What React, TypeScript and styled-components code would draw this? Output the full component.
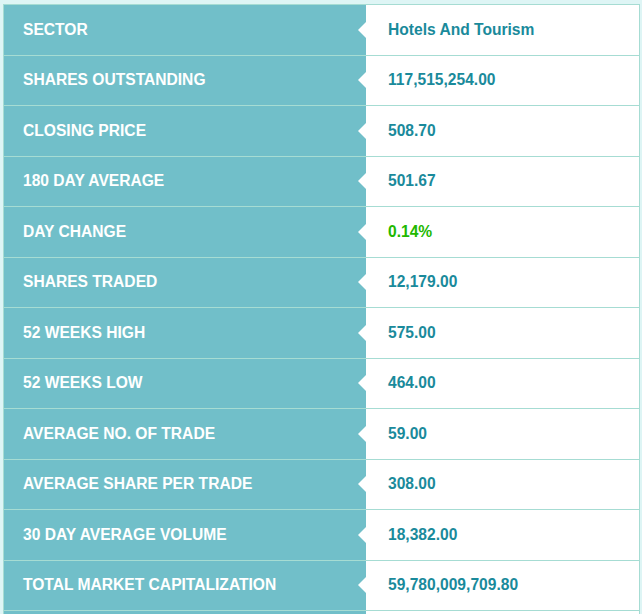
import React from "react";
import styled, { createGlobalStyle } from "styled-components";

const GlobalStyle = createGlobalStyle`
  html, body {
    margin: 0;
    padding: 0;
    background: #def5f5;
  }
  body {
    font-family: "Liberation Sans", Arial, Helvetica, sans-serif;
  }
`;

const Page = styled.div`
  padding: 4px 2px 0 3px;
  background: #def5f5;
  height: 614px;
  box-sizing: border-box;
  overflow: hidden;
`;

const Table = styled.div`
  border: 1px solid #a6dcd3;
  border-bottom: none;
  background: #ffffff;
`;

const Row = styled.div`
  display: grid;
  grid-template-columns: 362px 1fr;
  height: 50.5px;
  box-sizing: border-box;
  border-bottom: 1px solid #a6dcd3;
`;

const Label = styled.div`
  background: #71bfc9;
  color: #ffffff;
  font-weight: bold;
  font-size: 15.6px;
  line-height: 1;
  text-transform: uppercase;
  display: flex;
  align-items: center;
  padding-left: 19px;
`;

const Value = styled.div<{ $tone?: "up" | "normal" }>`
  position: relative;
  background: #ffffff;
  color: ${(p) => (p.$tone === "up" ? "#22b800" : "#1a8a9b")};
  font-weight: bold;
  font-size: 15.6px;
  line-height: 1;
  display: flex;
  align-items: center;
  padding-left: 22px;

  &::before {
    content: "";
    position: absolute;
    left: -8px;
    top: 50%;
    margin-top: -8px;
    border-top: 8px solid transparent;
    border-bottom: 8px solid transparent;
    border-right: 8px solid #ffffff;
  }
`;

type Item = { label: string; value: string; tone?: "up" | "normal" };

const items: Item[] = [
  { label: "Sector", value: "Hotels And Tourism" },
  { label: "Shares Outstanding", value: "117,515,254.00" },
  { label: "Closing Price", value: "508.70" },
  { label: "180 Day Average", value: "501.67" },
  { label: "Day Change", value: "0.14%", tone: "up" },
  { label: "Shares Traded", value: "12,179.00" },
  { label: "52 Weeks High", value: "575.00" },
  { label: "52 Weeks Low", value: "464.00" },
  { label: "Average No. Of Trade", value: "59.00" },
  { label: "Average Share Per Trade", value: "308.00" },
  { label: "30 Day Average Volume", value: "18,382.00" },
  { label: "Total Market Capitalization", value: "59,780,009,709.80" },
];

export default function App() {
  return (
    <>
      <GlobalStyle />
      <Page>
        <Table>
          {items.map((it) => (
            <Row key={it.label}>
              <Label>{it.label}</Label>
              <Value $tone={it.tone}>{it.value}</Value>
            </Row>
          ))}
          <Row>
            <Label />
            <Value />
          </Row>
        </Table>
      </Page>
    </>
  );
}
